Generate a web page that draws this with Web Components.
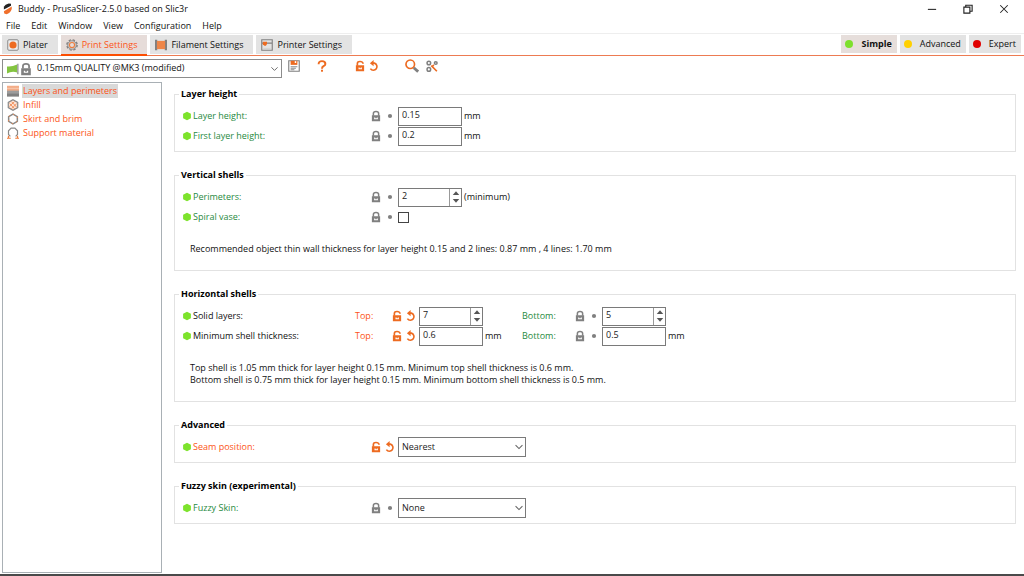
<!DOCTYPE html>
<html lang="en">
<head>
<meta charset="utf-8">
<meta name="viewport" content="width=device-width, initial-scale=1">
<title>Buddy - PrusaSlicer-2.5.0 based on Slic3r</title>
<style>
  :root {
    --orange: #ed6b21;
    --modified: #fc5416;
    --system: #1f8a40;
    --grey: #808080;
    --ui-font: "Open Sans", "Noto Sans", sans-serif;
  }
  body {
    margin: 0;
    font: 9px/12px var(--ui-font);
    color: #111;
    background: #fff;
  }
</style>
</head>
<body>
<slicer-app></slicer-app>

<script>
const define = (name, html, setup) => {
  const template = document.createElement('template');
  template.innerHTML = html;
  customElements.define(name, class extends HTMLElement {
    constructor() {
      super();
      this.attachShadow({ mode: 'open' }).append(template.content.cloneNode(true));
    }
    connectedCallback() {
      if (setup && !this.ready) { this.ready = true; setup(this, this.shadowRoot); }
    }
  });
};

const ICONS = {
  logo: '<path d="M2.500 8.500V5Q4 1.500 9 .5L12 1 12 3.500Z" fill="#222"/><path d="M2.500 11 13 4.500V8Q11 13.500 6 15L3 14Z" fill="#f0702c"/>',
  locked: '<path d="M4.500 7.500V4.500Q4.500 2 8 2T11.500 4.500V7.500" fill="none" stroke="#808080" stroke-width="2"/><path fill="#808080" fill-rule="evenodd" d="M2.500 7h11v8h-11zM5.500 10v2.200h5V10H9v1H7v-1z"/>',
  unlocked: '<path d="M4.500 7.500V4.500Q4.500 2 8 2T12 4.500V5" fill="none" stroke="#ed6b21" stroke-width="2.200"/><path fill="#ed6b21" fill-rule="evenodd" d="M2.500 7h11v8h-11zM6 10v2.200h4.500V10H9v1H7.500v-1z"/>',
  bullet: '<circle cx="8" cy="8" r="2.800" fill="#808080"/>',
  undo: '<path d="M6 4.200H8.500A4.800 4.800 0 1 1 3.200 11.500" fill="none" stroke="#ed6b21" stroke-width="2.200"/><path d="M7.500 0V8.400L2.500 4.200Z" fill="#ed6b21"/>',
  marker: '<path d="M8 2.200 13.200 5V11L8 13.800 2.800 11V5Z" fill="#7de32c"/>',
  plater: '<rect x="1" y="1" width="14" height="14" rx="1.500" fill="#eee" stroke="#888" stroke-width="1.300"/><circle cx="8" cy="8" r="4.800" fill="#ed6b21"/>',
  gear: '<circle cx="8" cy="8" r="6.900" fill="none" stroke="#808080" stroke-width="1.800" stroke-dasharray="3.200 2.220"/><circle cx="8" cy="8" r="5.600" fill="none" stroke="#808080" stroke-width="1.200"/><circle cx="8" cy="8" r="3.400" fill="none" stroke="#ed7c3c" stroke-width="1.500"/>',
  spool: '<path fill="#808080" d="M0 1h3v14H0zM13 1h3v14h-3z"/><path fill="#ee8649" d="M2.500 2.500h11v11h-11z"/>',
  printer: '<path fill="none" stroke="#808080" stroke-width="1.500" d="M1 1h14v14H1zM1 5.500h14"/><path fill="#ed6b21" d="M2.500 3.500h5.500v3L6.500 9H4.500L2.500 7z"/><path d="M3 12.500h10" stroke="#ccc"/>',
  flag: '<path d="M0 4.500Q6 5.500 13.500 2V12.500Q6 10.500 0 14Z" fill="#84c441"/><path d="M14.500 1V15" stroke="#808080" stroke-width="1.500"/>',
  save: '<path fill="none" stroke="#808080" stroke-width="1.500" d="M1 1h14v14H1z"/><path fill="#ed6b21" d="M3.500 1h9v5.500h-9z"/><path fill="#fff" d="M9 1.500h2V4H9z"/><path stroke="#808080" stroke-width="1.200" d="M3.500 9h9M3.500 11h7M3.500 13h5"/>',
  help: '<path d="M3.500 5.500Q3.500 1.500 8 1.500T12.500 5.200Q12.500 7 10 8.300 8 9.300 8 11.500" fill="none" stroke="#ed6b21" stroke-width="2.600"/><rect x="6.700" y="13" width="2.600" height="2.600" fill="#ed6b21"/>',
  search: '<circle cx="6" cy="6" r="4.900" fill="none" stroke="#ed6b21" stroke-width="1.900"/><path d="M10 10 15 14.500" stroke="#808080" stroke-width="3.200"/>',
  compare: '<g fill="none" stroke="#808080" stroke-width="2"><circle cx="3.800" cy="4" r="2.400"/><circle cx="13" cy="4" r="1.800"/><circle cx="3.800" cy="12.500" r="2.400"/></g><path d="M7 7.500 14.500 15M8 9 10.500 6.500" stroke="#ed6b21" stroke-width="2.200"/>',
  layers: '<path fill="#f3ad88" d="M0 1h16v7H0z"/><path d="M0 4.500h16" stroke="#f8d0bb"/><path fill="#9c9c9c" d="M0 7.500h16v4H0z"/><path fill="#808080" d="M0 11h16v4.500H0z"/>',
  infill: '<path d="M8 1 14.300 4.500V11.500L8 15 1.700 11.500V4.500Z" fill="#fbe3d6" stroke="#888" stroke-width="1.600"/><path d="M3.500 6 10 13M6 3.500 13 11M3 10 10 3.500M6 13 13 6" stroke="#ed7c3c"/>',
  skirt: '<path d="M8 1.500 13.800 4.800V11.200L8 14.500 2.200 11.200V4.800Z" fill="none" stroke="#888" stroke-width="2"/><path d="M8 1.500 13.800 4.800V11.200L8 14.500 2.200 11.200V4.800Z" fill="none" stroke="#ed8a50" stroke-width="1.200" stroke-dasharray="2 4.600"/>',
  support: '<path d="M4.500 12.500 2 10V5L5.500 1.500H10.500L14 5V10L11.500 12.500" fill="none" stroke="#888" stroke-width="1.600"/><path d="M0 15H5M11 15H16M2 11.500V15M14 11.500V15" stroke="#ed7c3c" stroke-width="1.600"/>',
  chevron: '<path d="M2.500 5 8 10.500 13.500 5" fill="none" stroke="#666" stroke-width="1.700"/>',
  up: '<path d="M1.500 12 8 4.500 14.500 12Z" fill="#555"/>',
  down: '<path d="M1.500 4 8 11.500 14.500 4Z" fill="#555"/>',
  minimize: '<path d="M2.500 8.500H13.500" stroke="#222" stroke-width="1.400"/>',
  restore: '<path d="M2.500 5.500h8v8h-8zM5 5V3H13.500V11H11" fill="none" stroke="#222" stroke-width="1.500"/>',
  close: '<path d="M3 3 13 13M13 3 3 13" stroke="#222" stroke-width="1.400"/>'
};

define('ps-icon', `
  <style>
    :host { display: block; flex: none; width: 12px; height: 12px; }
    svg { display: block; width: 100%; height: 100%; }
  </style>
  <svg viewBox="0 0 16 16" aria-hidden="true"></svg>`,
  (el, root) => { root.querySelector('svg').innerHTML = ICONS[el.getAttribute('name')] || ''; });

define('title-bar', `
  <style>
    :host { display: flex; align-items: center; height: 18px; padding: 0 2px; gap: 4px; }
    h1 { flex: 1; margin: 0; font: inherit; }
    .controls { display: flex; }
    button { display: grid; place-items: center; width: 36px; height: 16px; padding: 0; border: 0; background: none; }
  </style>
  <ps-icon name="logo"></ps-icon>
  <h1><slot></slot></h1>
  <div class="controls">
    <button aria-label="Minimize"><ps-icon name="minimize"></ps-icon></button>
    <button aria-label="Restore"><ps-icon name="restore"></ps-icon></button>
    <button aria-label="Close"><ps-icon name="close"></ps-icon></button>
  </div>`);

define('menu-bar', `
  <style>
    :host { display: block; border-bottom: 1px solid #eee; }
    nav { display: flex; gap: 11px; padding: 2px 6px 1px; }
    button { padding: 0; border: 0; background: none; font: inherit; color: inherit; }
  </style>
  <nav aria-label="Main menu"></nav>`,
  (el, root) => {
    root.querySelector('nav').innerHTML =
      el.getAttribute('items').split(',').map(t => `<button>${t}</button>`).join('');
  });

define('view-tab', `
  <style>
    :host { display: block; }
    button {
      display: flex; align-items: center; gap: 4px; width: 100%; height: 19px; box-sizing: border-box;
      padding: 0 10px 0 5px; border: 0; background: #e3e3e3; font: inherit; color: inherit; white-space: nowrap;
    }
    :host([selected]) button { color: var(--modified); background: #e6dcd9; box-shadow: 0 2px 0 #fc4d01; }
  </style>
  <button><ps-icon></ps-icon><slot></slot></button>`,
  (el, root) => {
    const icon = document.createElement('ps-icon');
    icon.setAttribute('name', el.getAttribute('icon'));
    root.querySelector('ps-icon').replaceWith(icon);
  });

define('mode-button', `
  <style>
    :host { display: block; }
    button {
      display: flex; align-items: center; gap: 8px; height: 18px; padding: 0 5px 0 4px;
      border: 0; background: #e3e3e3; font: inherit; color: inherit; white-space: nowrap;
    }
    i { width: 8px; height: 8px; border-radius: 50%; background: var(--dot); }
    :host([selected]) button { font-weight: 700; background: #e6dedb; }
  </style>
  <button><i></i><slot></slot></button>`);

define('tab-strip', `
  <style>
    :host { display: flex; justify-content: space-between; padding: 1px 3px 1px 2px; border-bottom: 1px solid #ed7b52; }
    div { display: flex; gap: 3px; }
  </style>
  <div><slot></slot></div>
  <div><slot name="modes"></slot></div>`);

define('preset-bar', `
  <style>
    :host { display: flex; align-items: flex-start; padding: 3px 2px 0; }
    .preset { position: relative; width: 280px; }
    select {
      display: block; appearance: none; width: 100%; height: 19px; box-sizing: border-box; padding: 0 20px 1px 34px;
      border: 1px solid #8c8c8c; border-radius: 0; background: #fff; font: inherit; color: inherit;
    }
    .adorn { position: absolute; inset: 0 3px 0 5px; display: flex; align-items: center; pointer-events: none; }
    .adorn ps-icon:last-child { margin-left: auto; width: 9px; }
    .large { width: 14px; height: 14px; }
    .tools { display: flex; align-items: center; padding-left: 5px; }
    button { display: grid; place-items: center; padding: 0; width: 14px; height: 14px; border: 0; background: none; }
    .apart { margin-left: 14px; }
    .far { margin-left: 24px; }
    .near { margin-left: 6px; }
  </style>
  <div class="preset">
    <select aria-label="Print preset"><option>0.15mm QUALITY @MK3 (modified)</option></select>
    <div class="adorn"><ps-icon name="flag"></ps-icon><ps-icon class="large" name="locked"></ps-icon><ps-icon name="chevron"></ps-icon></div>
  </div>
  <div class="tools">
    <button aria-label="Save preset"><ps-icon name="save"></ps-icon></button>
    <button class="apart" aria-label="Help"><ps-icon name="help"></ps-icon></button>
    <button class="far" aria-label="Unlock values"><ps-icon name="unlocked"></ps-icon></button>
    <button aria-label="Revert values"><ps-icon name="undo"></ps-icon></button>
    <button class="far" aria-label="Search"><ps-icon class="large" name="search"></ps-icon></button>
    <button class="near" aria-label="Compare presets"><ps-icon name="compare"></ps-icon></button>
  </div>`);

define('page-tree', `
  <style>
    :host { display: block; box-sizing: border-box; padding: 1px 4px; border: 1px solid #a9b0b5; }
    ul { margin: 0; padding: 0; list-style: none; }
    a { display: flex; align-items: center; gap: 3px; height: 14px; line-height: 14px; color: var(--modified); text-decoration: none; }
    span { padding: 0 1px; }
    .current span { background: #d9d9d9; }
  </style>
  <ul>
    <li><a class="current" href="#layers"><ps-icon name="layers"></ps-icon><span>Layers and perimeters</span></a></li>
    <li><a href="#infill"><ps-icon name="infill"></ps-icon><span>Infill</span></a></li>
    <li><a href="#skirt"><ps-icon name="skirt"></ps-icon><span>Skirt and brim</span></a></li>
    <li><a href="#support"><ps-icon name="support"></ps-icon><span>Support material</span></a></li>
  </ul>`);

define('option-group', `
  <style>
    :host { display: block; }
    fieldset { min-width: 0; margin: 0; padding: 5px 0; border: 1px solid #e2e2e2; }
    legend { height: 14px; margin-left: 4px; padding: 0 2px; line-height: 14px; font-weight: 700; color: #000; }
    ::slotted(p) { margin: 16px 15px 10px; }
  </style>
  <fieldset><legend></legend><slot></slot></fieldset>`,
  (el, root) => { root.querySelector('legend').textContent = el.getAttribute('heading'); });

/* One line of settings. fields: [{caption, type, value, unit, changed}] */
define('setting-row', `
  <style>
    :host { display: flex; align-items: center; height: 20px; padding-left: 6px; white-space: nowrap; }
    .name { flex: none; width: 175px; }
    .name.short { width: 162px; }
    .system { color: var(--system); }
    .changed { color: var(--modified); }
    .caption { flex: none; width: 34px; }
    .caption.second { width: 50px; }
    .state { display: flex; flex: none; align-items: center; justify-content: center; padding: 0; border: 0; background: none; height: 16px; }
    .lock { width: 15px; }
    .revert { width: 14px; margin-right: 1px; }
    input, select { box-sizing: border-box; margin: 0; border: 1px solid #7a7a7a; border-radius: 0; background: #fff; font: inherit; color: #222; }
    input[type=text] { width: 64px; height: 19px; padding: 0 3px 3px; }
    input[type=checkbox] { appearance: none; width: 11px; height: 11px; border-color: #444; }
    input[type=number] { appearance: textfield; flex: 1; min-width: 0; height: 17px; padding: 0 3px 3px; border: 0; border-right: 1px solid #999; }
    input[type=number]::-webkit-inner-spin-button { display: none; }
    .spin { display: flex; box-sizing: border-box; width: 64px; height: 19px; border: 1px solid #7a7a7a; }
    .arrows { display: grid; width: 11px; }
    .arrows button { display: grid; place-items: center; padding: 0; border: 0; background: none; height: 8px; }
    .arrows ps-icon { width: 8px; height: 8px; }
    .pick { position: relative; }
    select { display: block; appearance: none; width: 128px; height: 20px; padding: 0 16px 1px 3px; }
    .pick ps-icon { position: absolute; right: 2px; top: 5px; width: 10px; height: 10px; pointer-events: none; }
    .unit { flex: none; width: 37px; padding-left: 2px; }
  </style>`,
  (el, root) => {
    const fields = JSON.parse(el.getAttribute('fields'));
    const double = fields.length > 1;
    const tone = f => f.changed ? 'changed' : 'system';
    const control = (f, id) => ({
      text: `<input type="text" id="${id}" value="${f.value}">`,
      check: `<input type="checkbox" id="${id}">`,
      spin: `<span class="spin"><input type="number" id="${id}" value="${f.value}"><span class="arrows"><button aria-label="Increase"><ps-icon name="up"></ps-icon></button><button aria-label="Decrease"><ps-icon name="down"></ps-icon></button></span></span>`,
      pick: `<span class="pick"><select id="${id}"><option>${f.value}</option></select><ps-icon name="chevron"></ps-icon></span>`
    })[f.type];
    const title = el.getAttribute('label');
    let html = '<ps-icon name="marker"></ps-icon>';
    html += double
      ? `<span class="name short">${title}</span>`
      : `<label class="name ${tone(fields[0])}" for="f0">${title}</label>`;
    fields.forEach((f, i) => {
      if (double) html += `<label class="caption ${i ? 'second' : ''} ${tone(f)}" for="f${i}">${f.caption}</label>`;
      html += `<button class="state lock" aria-label="System value"><ps-icon name="${f.changed ? 'unlocked' : 'locked'}"></ps-icon></button>`;
      html += `<button class="state revert" aria-label="Revert"><ps-icon name="${f.changed ? 'undo' : 'bullet'}"></ps-icon></button>`;
      html += control(f, 'f' + i);
      html += `<span class="unit">${f.unit || ''}</span>`;
    });
    root.append(document.createRange().createContextualFragment(html));
  });

define('slicer-app', `
  <style>
    :host { display: flex; flex-direction: column; min-height: 100vh; box-sizing: border-box; border-bottom: 2px solid #4a4a4a; }
    .work { display: grid; grid-template-columns: 160px minmax(0, 1fr); flex: 1; gap: 12px; padding: 4px 8px 1px 2px; }
    main { display: flex; flex-direction: column; gap: 16px; padding-top: 5px; }
  </style>
  <title-bar>Buddy - PrusaSlicer-2.5.0 based on Slic3r</title-bar>
  <menu-bar items="File,Edit,Window,View,Configuration,Help"></menu-bar>
  <tab-strip>
    <view-tab icon="plater">Plater</view-tab>
    <view-tab icon="gear" selected>Print Settings</view-tab>
    <view-tab icon="spool">Filament Settings</view-tab>
    <view-tab icon="printer">Printer Settings</view-tab>
    <mode-button slot="modes" selected style="--dot:#7de02c">Simple</mode-button>
    <mode-button slot="modes" style="--dot:#ffd000">Advanced</mode-button>
    <mode-button slot="modes" style="--dot:#e00000">Expert</mode-button>
  </tab-strip>
  <preset-bar></preset-bar>
  <div class="work">
    <page-tree></page-tree>
    <main>
      <option-group heading="Layer height">
        <setting-row label="Layer height:" fields='[{"type":"text","value":"0.15","unit":"mm"}]'></setting-row>
        <setting-row label="First layer height:" fields='[{"type":"text","value":"0.2","unit":"mm"}]'></setting-row>
      </option-group>
      <option-group heading="Vertical shells">
        <setting-row label="Perimeters:" fields='[{"type":"spin","value":"2","unit":"(minimum)"}]'></setting-row>
        <setting-row label="Spiral vase:" fields='[{"type":"check"}]'></setting-row>
        <p>Recommended object thin wall thickness for layer height 0.15 and 2 lines: 0.87 mm , 4 lines: 1.70 mm</p>
      </option-group>
      <option-group heading="Horizontal shells">
        <setting-row label="Solid layers:" fields='[{"caption":"Top:","type":"spin","value":"7","changed":true},{"caption":"Bottom:","type":"spin","value":"5"}]'></setting-row>
        <setting-row label="Minimum shell thickness:" fields='[{"caption":"Top:","type":"text","value":"0.6","unit":"mm","changed":true},{"caption":"Bottom:","type":"text","value":"0.5","unit":"mm"}]'></setting-row>
        <p>Top shell is 1.05 mm thick for layer height 0.15 mm. Minimum top shell thickness is 0.6 mm.<br>Bottom shell is 0.75 mm thick for layer height 0.15 mm. Minimum bottom shell thickness is 0.5 mm.</p>
      </option-group>
      <option-group heading="Advanced">
        <setting-row label="Seam position:" fields='[{"type":"pick","value":"Nearest","changed":true}]'></setting-row>
      </option-group>
      <option-group heading="Fuzzy skin (experimental)">
        <setting-row label="Fuzzy Skin:" fields='[{"type":"pick","value":"None"}]'></setting-row>
      </option-group>
    </main>
  </div>`);
</script>
</body>
</html>
